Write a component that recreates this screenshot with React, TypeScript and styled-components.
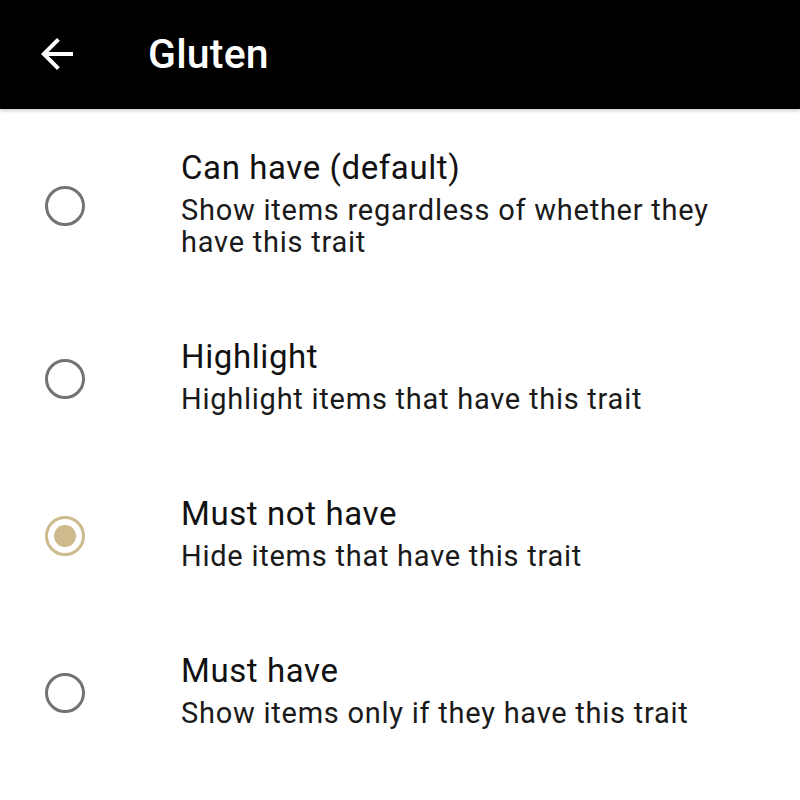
import React, { useState } from 'react';
import styled, { createGlobalStyle } from 'styled-components';

const GlobalStyle = createGlobalStyle`
  html, body {
    margin: 0;
    padding: 0;
    background: #ffffff;
  }
  body {
    font-family: Roboto, 'Noto Sans', sans-serif;
    color: #111111;
  }
`;

const Screen = styled.div`
  width: 800px;
  min-height: 800px;
  background: #ffffff;
`;

const TopBar = styled.header`
  display: flex;
  align-items: center;
  height: 109px;
  padding-left: 33px;
  background: #000000;
  color: #ffffff;
  box-shadow: 0 2px 3px rgba(0, 0, 0, 0.18);
  position: relative;
`;

const BackButton = styled.button`
  display: flex;
  align-items: center;
  justify-content: center;
  width: 48px;
  height: 48px;
  padding: 0;
  margin-top: -2px;
  border: none;
  background: transparent;
  color: #ffffff;
  cursor: pointer;
`;

const Title = styled.h1`
  margin: 0 0 0 67px;
  font-size: 41px;
  font-weight: 500;
  letter-spacing: 0.2px;
  line-height: 1;
`;

const List = styled.div`
  display: flex;
  flex-direction: column;
`;

const Row = styled.label`
  display: flex;
  align-items: center;
  gap: 51px;
  padding: 39px 0 40px;
  cursor: pointer;
`;

const RadioSlot = styled.div`
  display: flex;
  justify-content: center;
  width: 130px;
  padding-top: 5px;
  flex-shrink: 0;
`;

const Radio = styled.span<{ $checked: boolean }>`
  position: relative;
  width: 40px;
  height: 40px;
  box-sizing: border-box;
  border-radius: 50%;
  border: 3.5px solid ${({ $checked }) => ($checked ? '#cdbb8e' : '#737373')};

  &::after {
    content: '';
    position: absolute;
    inset: 6px;
    border-radius: 50%;
    background: #cdbb8e;
    display: ${({ $checked }) => ($checked ? 'block' : 'none')};
  }
`;

const Text = styled.div`
  display: flex;
  flex-direction: column;
  padding-right: 60px;
`;

const OptionTitle = styled.span`
  font-size: 33px;
  line-height: 40px;
  letter-spacing: 0.6px;
  margin-bottom: 6px;
  color: #111111;
`;

const OptionHint = styled.span`
  font-size: 29px;
  line-height: 32px;
  letter-spacing: 0.75px;
  color: #1a1a1a;
`;

const options = [
  {
    title: 'Can have (default)',
    hint: 'Show items regardless of whether they have this trait',
  },
  { title: 'Highlight', hint: 'Highlight items that have this trait' },
  { title: 'Must not have', hint: 'Hide items that have this trait' },
  { title: 'Must have', hint: 'Show items only if they have this trait' },
];

const BackArrow = () => (
  <svg width="48" height="48" viewBox="0 0 24 24" fill="currentColor">
    <path d="M20 11H7.83l5.59-5.59L12 4l-8 8 8 8 1.41-1.41L7.83 13H20v-2z" />
  </svg>
);

export default function App() {
  const [selected, setSelected] = useState(2);

  return (
    <Screen>
      <GlobalStyle />
      <TopBar>
        <BackButton aria-label="Back">
          <BackArrow />
        </BackButton>
        <Title>Gluten</Title>
      </TopBar>
      <List role="radiogroup">
        {options.map((option, i) => (
          <Row key={option.title} onClick={() => setSelected(i)}>
            <RadioSlot>
              <Radio $checked={selected === i} role="radio" aria-checked={selected === i} />
            </RadioSlot>
            <Text>
              <OptionTitle>{option.title}</OptionTitle>
              <OptionHint>{option.hint}</OptionHint>
            </Text>
          </Row>
        ))}
      </List>
    </Screen>
  );
}
